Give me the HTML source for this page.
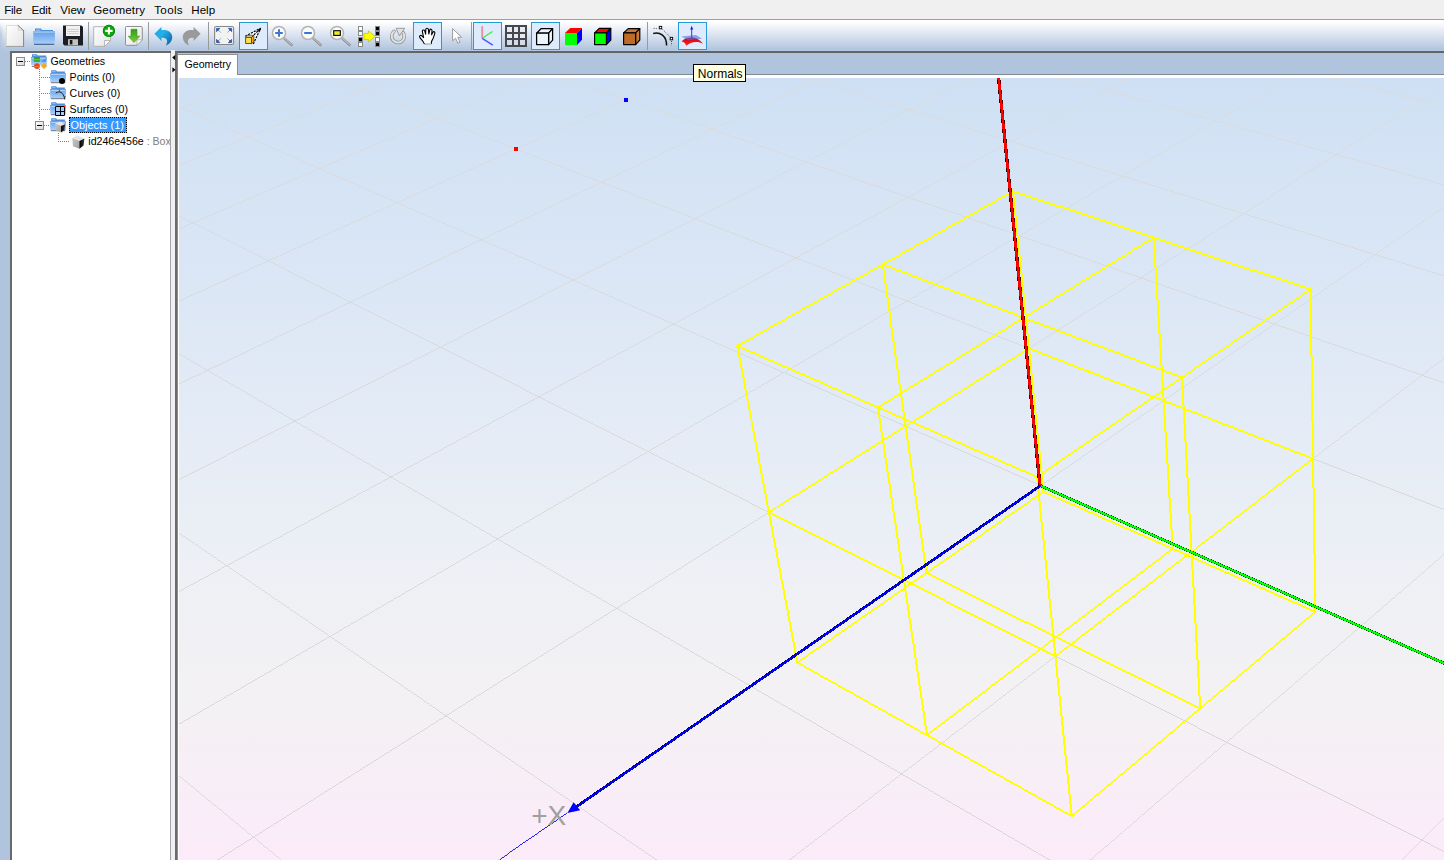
<!DOCTYPE html>
<html><head><meta charset="utf-8"><title>Geometry</title>
<style>
html,body{margin:0;padding:0}
body{width:1444px;height:860px;overflow:hidden;background:#b0c4de;position:relative;font-family:"Liberation Sans",sans-serif;color:#000}
div,span,svg{position:absolute}
#menubar{left:0;top:0;width:1444px;height:19px;background:#f0f0f0;border-bottom:1px solid #a0a0a0}
#menubar span{top:2px;font-size:11.6px;line-height:15px;white-space:nowrap}
#toolbar{left:0;top:20px;width:1444px;height:31px;background:linear-gradient(to bottom,#fff 0,#fff 6%,#b2c5df 95%,#b8cbe6 100%)}
#tbleft{left:0;top:22px;width:4px;height:29px;background:linear-gradient(to right,rgba(176,196,222,.85),rgba(176,196,222,0));-webkit-mask-image:linear-gradient(to bottom,transparent,#000 45%);mask-image:linear-gradient(to bottom,transparent,#000 45%)}
#tbsvg{left:0;top:0}
#tree{left:10px;top:51px;width:159px;height:809px;background:#fff;border-left:2px solid #696969;border-top:2px solid #696969;box-sizing:content-box;overflow:hidden}
#treeR{left:170px;top:53px;width:1px;height:807px;background:#a0a4ac}
#split{left:171px;top:50px;width:4px;height:810px;background:#f0f0f0}
#darkv{left:175px;top:51px;width:2px;height:809px;background:#6b6b6b}
#darkv2{left:177px;top:53px;width:1px;height:807px;background:#8c8c8c}
#darkh{left:175px;top:51px;width:1269px;height:2px;background:#646464}
#strip{left:177px;top:53px;width:1267px;height:21px;background:#b0c4de}
#stripline{left:178px;top:74px;width:1266px;height:1px;background:#7f8894}
#white{left:178px;top:75px;width:1266px;height:785px;background:#fff}
#tab{left:178px;top:54px;width:59px;height:20px;background:#fff;border-top:1px solid #8a8f98;border-right:1px solid #8a8f98;box-sizing:content-box}
#tab span{left:6.6px;top:2px;font-size:10.6px;line-height:15px}
#vp{left:179px;top:78px}
.t{font-size:10.6px;line-height:16px;white-space:nowrap;height:16px}
#sel{left:69px;top:117px;width:56px;height:14px;background:#e8a040;border:1px dotted #000;box-sizing:content-box}
#sel i{position:absolute;left:0;top:0;right:0;bottom:0;background:#3399ff}
#tip{left:693px;top:64px;width:51px;height:16px;background:#ffffe1;border:1px solid #000;box-sizing:content-box}
#tip span{left:3.8px;top:0.5px;font-size:12px;line-height:16px}
</style></head><body>
<div id="menubar"><span style="left:4.3px;letter-spacing:-.3px">File</span><span style="left:31.4px;letter-spacing:-.1px">Edit</span><span style="left:60.3px">View</span><span style="left:93.2px;letter-spacing:.12px">Geometry</span><span style="left:154.2px;letter-spacing:.35px">Tools</span><span style="left:191.3px">Help</span></div>
<div id="toolbar"></div><div id="tbleft"></div>
<div id="darkh"></div>
<div id="strip"></div><div id="stripline"></div><div id="white"></div>
<div id="tree"></div><div id="treeR"></div><div id="split"></div><div id="darkv"></div><div id="darkv2"></div>
<svg id="arrows" width="4" height="30" viewBox="0 0 4 30" style="left:172px;top:54px"><path d="M3.2 1L0.2 3.6L3.2 6.2Z M0.4 13.2L3.4 15.8L0.4 18.4Z" fill="#000"/></svg>
<div id="tab"><span>Geometry</span></div>
<svg id="vp" width="1265" height="782" viewBox="0 0 1265 782" shape-rendering="crispEdges">
<defs><linearGradient id="bg" x1="0" y1="0" x2="0" y2="1"><stop offset="0" stop-color="#cfe0f4"/><stop offset="0.43" stop-color="#e3ebf6"/><stop offset="0.64" stop-color="#eef0f5"/><stop offset="0.8" stop-color="#f3f1f3"/><stop offset="1" stop-color="#fcebfa"/></linearGradient><linearGradient id="gg" gradientUnits="userSpaceOnUse" x1="0" y1="0" x2="0" y2="782"><stop offset="0" stop-color="#dbdbdd"/><stop offset="0.6" stop-color="#d6d6d6"/><stop offset="1" stop-color="#d3d3d3"/></linearGradient></defs>
<rect width="1265" height="782" fill="url(#bg)"/>
<g stroke="url(#gg)" fill="none">
<path d="M91.4 -5L-5 32.9" stroke-width="0.931"/>
<path d="M225.2 -5L-5 89.4" stroke-width="0.925"/>
<path d="M363 -5L-5 153.1" stroke-width="0.919"/>
<path d="M505.1 -5L-5 225.4" stroke-width="0.911"/>
<path d="M1134.6 -5L1270 29.4" stroke-width="0.969"/>
<path d="M651.7 -5L-5 308.3" stroke-width="0.903"/>
<path d="M866.2 -5L1270 108.2" stroke-width="0.963"/>
<path d="M802.9 -5L-5 404.1" stroke-width="0.892"/>
<path d="M611.9 -5L1270 199.5" stroke-width="0.955"/>
<path d="M959 -5L-5 516.2" stroke-width="0.880"/>
<path d="M370.5 -5L1270 306.5" stroke-width="0.945"/>
<path d="M1120.2 -5L-5 649.1" stroke-width="0.865"/>
<path d="M141.2 -5L1270 433.5" stroke-width="0.932"/>
<path d="M1270 5.6L30.4 787" stroke-width="0.846"/>
<path d="M-5 26.6L1270 587" stroke-width="0.915"/>
<path d="M1270 125.6L312.2 787" stroke-width="0.823"/>
<path d="M-5 135.5L1270 775.8" stroke-width="0.894"/>
<path d="M1270 276.6L603.8 787" stroke-width="0.794"/>
<path d="M-5 272.9L879.3 787" stroke-width="0.865"/>
<path d="M1270 472.1L905.6 787" stroke-width="0.757"/>
<path d="M-5 451.6L485 787" stroke-width="0.825"/>
<path d="M1270 735.5L1218.3 787" stroke-width="0.708"/>
<path d="M-5 693.7L108.3 787" stroke-width="0.772"/>
</g>
<g stroke="#ff0" fill="none" stroke-linecap="square">
<path d="M864.5 413.8L618.4 584.6" stroke-width="1.643"/>
<path d="M864.5 413.8L1136.4 533.8" stroke-width="1.830"/>
<path d="M864.5 413.8L834.1 113.2" stroke-width="1.990"/>
<path d="M850 270.4L589.9 434.3" stroke-width="1.692"/>
<path d="M850 270.4L1134 380.7" stroke-width="1.864"/>
<path d="M993.7 470.8L974.7 159.6" stroke-width="1.996"/>
<path d="M834.1 113.2L558.4 268" stroke-width="1.744"/>
<path d="M834.1 113.2L1131.5 211.3" stroke-width="1.899"/>
<path d="M1136.4 533.8L1131.5 211.3" stroke-width="2.000"/>
<path d="M993.7 470.8L748.1 657.1" stroke-width="1.593"/>
<path d="M747.5 495L1021.2 630.5" stroke-width="1.793"/>
<path d="M747.5 495L703.7 186.5" stroke-width="1.980"/>
<path d="M974.7 159.6L699 329.5" stroke-width="1.703"/>
<path d="M703.7 186.5L1003 299.4" stroke-width="1.871"/>
<path d="M1021.2 630.5L1003 299.4" stroke-width="1.997"/>
<path d="M1136.4 533.8L892.8 738.2" stroke-width="1.532"/>
<path d="M618.4 584.6L892.8 738.2" stroke-width="1.745"/>
<path d="M618.4 584.6L558.4 268" stroke-width="1.965"/>
<path d="M1134 380.7L876.4 578.2" stroke-width="1.588"/>
<path d="M589.9 434.3L876.4 578.2" stroke-width="1.787"/>
<path d="M748.1 657.1L699 329.5" stroke-width="1.978"/>
<path d="M1131.5 211.3L858 398.9" stroke-width="1.649"/>
<path d="M558.4 268L858 398.9" stroke-width="1.833"/>
<path d="M892.8 738.2L858 398.9" stroke-width="1.990"/>
</g>
<rect x="335" y="69" width="4" height="4" fill="#f00"/>
<rect x="445" y="20" width="4" height="4" fill="#00f"/>
<path d="M861 407.5L819.1 -5" stroke="#400" stroke-width="3.336" fill="none"/>
<path d="M861 407.5L819.1 -5" stroke="#f00" stroke-width="2.536" fill="none"/>
<path d="M861.7 407.9L1270 587.4" stroke="#050" stroke-width="2.930" fill="none"/>
<path d="M861.7 407.9L1270 587.4" stroke="#0f0" stroke-width="2.130" fill="none"/>
<path d="M388.4 734.9L312.2 787" stroke="#00f" stroke-width="0.826" fill="none"/>
<path d="M861.7 407.5L394.4 730.8" stroke="#004" stroke-width="2.812" fill="none"/>
<path d="M861.7 407.5L394.4 730.8" stroke="#00f" stroke-width="2.012" fill="none"/>
<path d="M388.4 734.9L394.6 724.2L401.2 732.3Z" fill="#00f" shape-rendering="auto"/>
<text x="352.2" y="747.2" font-family="Liberation Sans, sans-serif" font-size="28" fill="#a0a0a0">+X</text>
</svg>
<svg id="treeicons" width="160" height="110" viewBox="10 51 160 110" style="position:absolute;left:10px;top:51px" ><defs><linearGradient id="fd2" x1="0" y1="0" x2="0" y2="1"><stop offset="0" stop-color="#4388dc"/><stop offset="0.18" stop-color="#6ea8ee"/><stop offset="1" stop-color="#b0d2fa"/></linearGradient><linearGradient id="eb" x1="0" y1="0" x2="1" y2="1"><stop offset="0" stop-color="#fff"/><stop offset="1" stop-color="#d8d8d8"/></linearGradient></defs><g shape-rendering="crispEdges"><path d="M25 61.5H31" stroke="#808080" stroke-width="1" stroke-dasharray="1 1"/><path d="M39.5 69V125" stroke="#808080" stroke-width="1" stroke-dasharray="1 1"/><path d="M39 77.5H50" stroke="#808080" stroke-width="1" stroke-dasharray="1 1"/><path d="M39 93.5H50" stroke="#808080" stroke-width="1" stroke-dasharray="1 1"/><path d="M39 109.5H50" stroke="#808080" stroke-width="1" stroke-dasharray="1 1"/><path d="M44 125.5H50" stroke="#808080" stroke-width="1" stroke-dasharray="1 1"/><path d="M58.5 133V142" stroke="#808080" stroke-width="1" stroke-dasharray="1 1"/><path d="M58 141.5H70" stroke="#808080" stroke-width="1" stroke-dasharray="1 1"/><rect x="16.5" y="57.5" width="8" height="8" fill="url(#eb)" stroke="#8a8a8a"/><path d="M18 61.5h5" stroke="#000"/><rect x="35.5" y="121.5" width="8" height="8" fill="url(#eb)" stroke="#8a8a8a"/><path d="M37 125.5h5" stroke="#000"/></g><g transform="translate(31,53)"><path d="M1 1.2h4.9l0.8 1.2h8.3v2.4H1z" fill="#4f8ede"/><path d="M2 2.2h3.4v1H2z" fill="#9cc2f0"/><rect x="0.2" y="3.7" width="15.7" height="8.6" rx="0.6" fill="url(#fd2)"/><path d="M1 5.2h14" stroke="#cfe2fa" stroke-width="0.9"/><rect x="2.9" y="4" width="6" height="4.9" fill="#2eb41a"/><path d="M3 6.3h5.8" stroke="#6ee03c" stroke-width="0.8"/><path d="M3 5.2h5.8" stroke="#1e8a10" stroke-width="0.7"/><path d="M10 8.8L14.6 5.2V8.8Z" fill="#2a9af0"/><path d="M0.8 13.4h3" stroke="#5a6478" stroke-width="0.9"/><circle cx="6" cy="13.1" r="2.9" fill="#e8481c"/><path d="M4 13.6h4" stroke="#ff7a3a" stroke-width="1"/><path d="M13 9.8L15.9 12.8L13 15.8L10.1 12.8Z" fill="#f4a81c" stroke="#f0b030" stroke-width="0.8" stroke-linejoin="round"/></g><g transform="translate(50,69)"><path d="M1.2 1.2h4.9l0.8 1.2h8v2.4H1.2z" fill="#4f8ede"/><path d="M2 2.2h3.6v1H2z" fill="#9cc2f0"/><rect x="0.2" y="3.9" width="15.7" height="9.6" rx="0.6" fill="url(#fd2)"/><path d="M1 5.3h14" stroke="#cfe2fa" stroke-width="0.9"/><path d="M1 13.7h14.2" stroke="#5a6478" stroke-width="0.9"/></g><circle cx="62" cy="81.1" r="3" fill="#000"/><g transform="translate(50,85)"><path d="M1.2 1.2h4.9l0.8 1.2h8v2.4H1.2z" fill="#4f8ede"/><path d="M2 2.2h3.6v1H2z" fill="#9cc2f0"/><rect x="0.2" y="3.9" width="15.7" height="9.6" rx="0.6" fill="url(#fd2)"/><path d="M1 5.3h14" stroke="#cfe2fa" stroke-width="0.9"/><path d="M1 13.7h14.2" stroke="#5a6478" stroke-width="0.9"/></g><path d="M55.8 93.2C59.4 90.4 63.4 92 64.8 99.4" fill="none" stroke="#1a1a1a" stroke-width="0.95"/><path d="M58.8 90.2h1.4M65 96v1.2" stroke="#222" stroke-width="0.8"/><g transform="translate(50,101)"><path d="M1.2 1.2h4.9l0.8 1.2h8v2.4H1.2z" fill="#4f8ede"/><path d="M2 2.2h3.6v1H2z" fill="#9cc2f0"/><rect x="0.2" y="3.9" width="15.7" height="9.6" rx="0.6" fill="url(#fd2)"/><path d="M1 5.3h14" stroke="#cfe2fa" stroke-width="0.9"/><path d="M1 13.7h14.2" stroke="#5a6478" stroke-width="0.9"/></g><g shape-rendering="crispEdges"><rect x="55.5" y="106.5" width="9" height="9" fill="#a8ccf6" stroke="#000" stroke-width="1"/><path d="M60.5 106V116M55 111.5H65" stroke="#000"/><rect x="55" y="106" width="1" height="1" fill="#f00"/><rect x="64" y="106" width="1" height="1" fill="#f00"/><rect x="55" y="115" width="1" height="1" fill="#f00"/><rect x="64" y="115" width="1" height="1" fill="#f00"/></g><g transform="translate(50,117)"><path d="M1.2 1.2h4.9l0.8 1.2h8v2.4H1.2z" fill="#4f8ede"/><path d="M2 2.2h3.6v1H2z" fill="#9cc2f0"/><rect x="0.2" y="3.9" width="15.7" height="9.6" rx="0.6" fill="url(#fd2)"/><path d="M1 5.3h14" stroke="#cfe2fa" stroke-width="0.9"/><path d="M1 13.7h14.2" stroke="#5a6478" stroke-width="0.9"/></g><g transform="translate(54.8,121.6) scale(0.82)"><defs><linearGradient id="cbk" x1="0" y1="0" x2="1" y2="0"><stop offset="0" stop-color="#000"/><stop offset="1" stop-color="#3c3c3c"/></linearGradient><linearGradient id="cgr" x1="0" y1="0" x2="1" y2="1"><stop offset="0" stop-color="#c8c8c8"/><stop offset="1" stop-color="#a2a2a2"/></linearGradient></defs><path d="M0.4 2.6L5.9 0L12.6 3.2L7.6 5.5Z" fill="#e6e6e6"/><path d="M0.4 2.6L7.6 5.5V13.4L1.2 10.8Z" fill="url(#cgr)"/><path d="M7.6 5.5L12.6 3.2L11.8 10.2L7.6 13.4Z" fill="url(#cbk)"/></g><g transform="translate(71.8,135.4) scale(1.0)"><defs><linearGradient id="cbk" x1="0" y1="0" x2="1" y2="0"><stop offset="0" stop-color="#000"/><stop offset="1" stop-color="#3c3c3c"/></linearGradient><linearGradient id="cgr" x1="0" y1="0" x2="1" y2="1"><stop offset="0" stop-color="#c8c8c8"/><stop offset="1" stop-color="#a2a2a2"/></linearGradient></defs><path d="M0.4 2.6L5.9 0L12.6 3.2L7.6 5.5Z" fill="#e6e6e6"/><path d="M0.4 2.6L7.6 5.5V13.4L1.2 10.8Z" fill="url(#cgr)"/><path d="M7.6 5.5L12.6 3.2L11.8 10.2L7.6 13.4Z" fill="url(#cbk)"/></g></svg>
<div id="sel"><i></i></div>
<span class="t" style="left:50.4px;top:53px">Geometries</span>
<span class="t" style="left:69.6px;top:69px">Points (0)</span>
<span class="t" style="left:69.6px;top:85px;letter-spacing:.14px">Curves (0)</span>
<span class="t" style="left:69.6px;top:101px;letter-spacing:.07px">Surfaces (0)</span>
<span class="t" style="left:70.6px;top:117px;color:#fff;font-size:10.9px">Objects (1)</span>
<span class="t" style="left:88.3px;top:133px;width:81.7px;overflow:hidden">id246e456e<span style="position:static;color:#808080"> : Box</span></span>
<svg id="tbsvg" width="760" height="54" viewBox="0 0 760 54">
<defs>
<linearGradient id="pg" x1="0" y1="0" x2="1" y2="1"><stop offset="0" stop-color="#fff"/><stop offset="1" stop-color="#e4e4e4"/></linearGradient>
<linearGradient id="fd" x1="0" y1="0" x2="0" y2="1"><stop offset="0" stop-color="#4a8fe0"/><stop offset="0.15" stop-color="#6aa5ec"/><stop offset="1" stop-color="#a8cdf8"/></linearGradient>
<linearGradient id="ud" x1="0" y1="0" x2="1" y2="1"><stop offset="0" stop-color="#1ea0e0"/><stop offset="0.4" stop-color="#25b0ea"/><stop offset="1" stop-color="#0a5a9c"/></linearGradient>
<linearGradient id="ga" x1="0" y1="0" x2="0" y2="1"><stop offset="0" stop-color="#2f9a1c"/><stop offset="1" stop-color="#7fd034"/></linearGradient>
<linearGradient id="rs" x1="0" y1="0" x2="0" y2="1"><stop offset="0" stop-color="#a01030"/><stop offset="0.5" stop-color="#f01010"/><stop offset="1" stop-color="#ff2020"/></linearGradient>
</defs>
<!-- new -->
<g>
<path d="M6.5 25.5H18.2L23.5 30.6V46.3H6.5Z" fill="url(#pg)" stroke="#dedede" stroke-width="1"/>
<path d="M6.2 46.5H23.9" stroke="#9c9c9c" stroke-width="1.1" fill="none"/><path d="M6.6 47.3H23.6" stroke="#c4cad6" stroke-width="0.7" fill="none"/>
<path d="M23.6 30.4V46.8" stroke="#808080" stroke-width="0.95" fill="none"/>
<path d="M18.2 25.6V30.6H23.4Z" fill="#ececec"/>
<path d="M18.2 25.6V30.4H23" stroke="#d0d0d0" stroke-width="0.7" fill="none"/>
<path d="M17.8 25.2L23.7 30.8" stroke="#6a6a6a" stroke-width="0.9" fill="none"/>
</g>
<!-- open folder -->
<g>
<path d="M35 28.5h6l1 1.5h11v4h-18z" fill="#4f8fdc"/>
<path d="M36 29.6h4.5v1.4H36z" fill="#8db8ee"/>
<rect x="33.3" y="31" width="21.6" height="12.8" rx="0.8" fill="url(#fd)"/>
<path d="M33.8 32h20.6" stroke="#d4e6fb" stroke-width="0.9"/>
<path d="M34 44.3h20.2" stroke="#3c5a8c" stroke-width="1.1"/>
</g>
<!-- save -->
<g>
<path d="M63 25.5h18.5l1.5 1.5v18.5h-18.5l-1.5-1.5z" fill="#1c1e26"/>
<rect x="66" y="25.8" width="14" height="10.2" fill="#f2f2f2"/>
<path d="M67.3 29.4h11.4M67.3 31.5h11.4M67.3 33.6h11.4" stroke="#d0cdc8" stroke-width="1"/>
<rect x="68" y="39.2" width="10" height="6" fill="#c4c2bc"/>
<rect x="69.8" y="40" width="2.6" height="4.4" fill="#14161e"/>
</g>
<path d="M88.5 22V50M148.5 22V50M208.5 22V50M471.5 22V50M647.5 22V50" stroke="#9a9a9a" stroke-width="1" shape-rendering="crispEdges"/>
<!-- new+ -->
<g>
<path d="M93.7 26.7H110.5V40.5L104.5 46.3H93.7Z" fill="url(#pg)" stroke="#b4b4b4" stroke-width="1"/>
<path d="M104.5 46.3V40.5H110.5Z" fill="#fff" stroke="#a8a8a8" stroke-width="0.8"/>
<circle cx="108.9" cy="30.9" r="6.1" fill="#0fa50f"/><circle cx="108.9" cy="30.9" r="5.6" fill="none" stroke="#0a8c0a" stroke-width="0.9"/>
<path d="M108.9 27.2V34.6M105.2 30.9H112.6" stroke="#fff" stroke-width="2.1"/>
</g>
<!-- download -->
<g>
<path d="M126.5 26.5H141.2Q142.3 26.5 142.3 27.6V39.8L137 45.3H126.5Q125.5 45.3 125.5 44.3V27.5Q125.5 26.5 126.5 26.5Z" fill="url(#pg)" stroke="#8e8e8e" stroke-width="1"/>
<path d="M137 45.3V39.8H142.3Z" fill="#fff" stroke="#a8a8a8" stroke-width="0.8"/>
<path d="M131 29.2h6v7h2.8l-5.8 6.3l-5.8-6.3H131z" fill="url(#ga)" stroke="#3a9a20" stroke-width="0.6"/>
</g>
<!-- undo -->
<path id="undo" d="M154.4 33.7L161.4 26.9V30.2C167.6 29.4 172.3 32.2 172.2 37.2C172.1 41.2 169.2 44.2 165.8 45.6C167.5 42.8 167.6 40.2 165.9 38.7C164.7 37.7 163 37.7 161.4 37.9V41Z" fill="url(#ud)"/>
<!-- redo -->
<path d="M200.6 33.7L193.6 26.9V30.2C187.4 29.4 182.7 32.2 182.8 37.2C182.9 41.2 185.8 44.2 189.2 45.6C187.5 42.8 187.4 40.2 189.1 38.7C190.3 37.7 192 37.7 193.6 37.9V41Z" fill="#9a9a9a"/>
<!-- fullscreen -->
<g>
<rect x="214.6" y="26.5" width="19" height="18" rx="1.6" fill="#f2f2f0" stroke="#8a8884" stroke-width="1.1"/>
<g fill="#2a5cb0" stroke="#2a5cb0" stroke-width="0.9">
<path d="M216.6 28.4h3.2l-3.2 3.2z"/><path d="M217.5 29.3l3.4 3.4" stroke-dasharray="2.2 0.5 0.8 0.5 0.5"/>
<path d="M231.6 28.4h-3.2l3.2 3.2z"/><path d="M230.7 29.3l-3.4 3.4" stroke-dasharray="2.2 0.5 0.8 0.5 0.5"/>
<path d="M216.6 42.6h3.2l-3.2-3.2z"/><path d="M217.5 41.7l3.4-3.4" stroke-dasharray="2.2 0.5 0.8 0.5 0.5"/>
<path d="M231.6 42.6h-3.2l3.2-3.2z"/><path d="M230.7 41.7l-3.4-3.4" stroke-dasharray="2.2 0.5 0.8 0.5 0.5"/>
</g></g>
<!-- selected boxes -->
<g fill="#ddebfc" stroke="#2a9ad6" stroke-width="1" shape-rendering="crispEdges">
<rect x="239.5" y="22.5" width="28" height="27"/>
<rect x="413.5" y="22.5" width="28" height="27"/>
<rect x="473.5" y="22.5" width="28" height="27"/>
<rect x="531.5" y="22.5" width="28" height="27"/>
<rect x="678.5" y="22.5" width="28" height="27"/>
</g>
<!-- perspective -->
<g stroke-linejoin="round">
<path d="M246 36L260.6 28.3L253.4 43.5L251.5 37.2Z" fill="#fff" fill-opacity="0.8"/>
<path d="M245.3 36.3L260.7 28.2M251.7 37L260.5 28.5M253.3 43.9L260.6 28.4" fill="none" stroke="#000" stroke-dasharray="2.1 1.1" stroke-width="1.2"/>
<path d="M245.4 37.2L247.1 35.3H253.6L251.5 37.2Z" fill="#fff8c0" stroke="#3c2c00" stroke-width="0.7"/>
<path d="M251.5 37.2L253.9 35.4V42L251.5 43.6Z" fill="#ffa428" stroke="#3c2c00" stroke-width="0.7"/>
<rect x="245.6" y="37.4" width="5.9" height="6.1" fill="#fae048" stroke="#5a4200" stroke-width="0.9"/>
<path d="M257.6 30.2L261.1 27.7L260 31.6Z" fill="#000"/>
</g>
<!-- zoom in -->
<g>
<path d="M284 38.2L291.6 45" stroke="#8c8c8c" stroke-width="2.4" stroke-linecap="round"/>
<path d="M284.2 38L291.4 44.6" stroke="#dcdcdc" stroke-width="0.9" stroke-linecap="round"/>
<circle cx="279" cy="33" r="6.5" fill="#fbfbfb" stroke="#b4b4b4" stroke-width="1.5"/>
</g>
<path d="M279 29.3V36.7M275.2 33H282.8" stroke="#3a78d4" stroke-width="2"/>
<!-- zoom out -->
<g transform="translate(29,0)">
<path d="M284 38.2L291.6 45" stroke="#8c8c8c" stroke-width="2.4" stroke-linecap="round"/>
<path d="M284.2 38L291.4 44.6" stroke="#dcdcdc" stroke-width="0.9" stroke-linecap="round"/>
<circle cx="279" cy="33" r="6.5" fill="#fbfbfb" stroke="#b4b4b4" stroke-width="1.5"/>
</g>
<path d="M304.2 33H311.8" stroke="#3a78d4" stroke-width="2"/>
<!-- zoom rect -->
<g transform="translate(58,0)">
<path d="M284 38.2L291.6 45" stroke="#8c8c8c" stroke-width="2.4" stroke-linecap="round"/>
<path d="M284.2 38L291.4 44.6" stroke="#dcdcdc" stroke-width="0.9" stroke-linecap="round"/>
<circle cx="279" cy="33" r="6.5" fill="#fbfbfb" stroke="#b4b4b4" stroke-width="1.5"/>
</g>
<rect x="333.7" y="30.7" width="6.6" height="4.7" fill="#ecec24" stroke="#000" stroke-width="1.1"/>
<!-- invert selection -->
<g shape-rendering="crispEdges">
<rect x="358" y="26" width="5" height="10" fill="#8a8a8a"/><rect x="358" y="37" width="5" height="10" fill="#8a8a8a"/>
<rect x="359" y="27" width="3" height="3" fill="#fff"/><rect x="359" y="32" width="3" height="3" fill="#fff"/>
<rect x="359" y="38" width="3" height="3" fill="#000"/><rect x="359" y="43" width="3" height="3" fill="#fff"/>
<rect x="375" y="26" width="5" height="10" fill="#8a8a8a"/><rect x="375" y="37" width="5" height="10" fill="#8a8a8a"/>
<rect x="376" y="27" width="3" height="3" fill="#000"/><rect x="376" y="32" width="3" height="3" fill="#000"/>
<rect x="376" y="38" width="3" height="3" fill="#fff"/><rect x="376" y="43" width="3" height="3" fill="#000"/>
</g>
<path d="M364 33.4h4.4v-2.6l6.6 5.6l-6.6 5.6v-2.6H364z" fill="#ff0" stroke="#a8a800" stroke-width="0.5"/>
<!-- rotate -->
<g>
<path d="M394 31.4A6.3 6.3 0 1 0 403 32.5" fill="none" stroke="#8c8c8c" stroke-width="3.5" stroke-linecap="round"/>
<path d="M394 31.4A6.3 6.3 0 1 0 403 32.5" fill="none" stroke="#e2e2e2" stroke-width="2" stroke-linecap="round"/>
<path d="M396.2 28.3H404.7L399.4 35.9Z" fill="#e2e2e2" stroke="#8c8c8c" stroke-width="0.85" stroke-linejoin="round"/>
</g>
<!-- hand -->
<g transform="translate(419,27.8)">
<path d="M5.2 15.8C4 13 2 11.5 0.8 9.6C0 8.2 1.4 7 2.8 8L4.6 9.8L3.4 3.8C3 2 5.2 1.6 5.8 3.2L6.6 6.4L6.8 1.6C6.9 0 9.2 0 9.4 1.6L9.8 6.2L10.8 2.2C11.2 0.8 13.2 1.2 13 2.8L12.6 7L13.8 4.6C14.6 3.2 16.2 4 15.8 5.6C15 8.6 14.4 11 12.6 13.6L12.2 15.8Z" fill="#fff" stroke="#000" stroke-width="1.1" stroke-linejoin="round"/>
<path d="M5.6 15.4h6.4v1H5.6z" fill="#fff"/>
</g>
<!-- pointer -->
<path d="M452.6 28.6V40.8L455.6 38.2L457.8 43.2L460 42.2L457.8 37.4L461.6 37.2Z" fill="#fff" stroke="#9a9a9a" stroke-width="1" stroke-linejoin="round"/>
<!-- axes icon -->
<path d="M482.2 38.3V26.2" stroke="#e890a0" stroke-width="1.9"/>
<path d="M482.2 38.3L492.4 31.5" stroke="#3cf03c" stroke-width="1.3"/>
<path d="M482.2 38.3L492.8 45.2" stroke="#5858ff" stroke-width="1.6"/>
<!-- grid -->
<g shape-rendering="crispEdges">
<rect x="505" y="25" width="22" height="22" fill="#46484c"/>
<g fill="#e6eaf2">
<rect x="507" y="27" width="5" height="5"/><rect x="514" y="27" width="4" height="5"/><rect x="520" y="27" width="5" height="5"/>
<rect x="507" y="34" width="5" height="4"/><rect x="514" y="34" width="4" height="4"/><rect x="520" y="34" width="5" height="4"/>
</g><g fill="#d2dcea">
<rect x="507" y="40" width="5" height="5"/><rect x="514" y="40" width="4" height="5"/><rect x="520" y="40" width="5" height="5"/>
</g></g>
<!-- wire cube -->
<g stroke="#000" stroke-width="1.25" stroke-linejoin="round" fill="#eef4ff">
<path d="M536.6 33.2L541 28.7H552.6L548.6 33.2Z"/>
<path d="M548.6 33.2L552.6 28.7V40.2L548.6 44.6Z"/>
<rect x="536.6" y="33.2" width="12" height="11.4"/>
</g>
<!-- color cube 1 -->
<path d="M565 33L570.3 27.9H582L577 33Z" fill="#f00"/>
<path d="M577 33L582 27.9V39.8L577 45.1Z" fill="#00f"/>
<rect x="565" y="33" width="12" height="12.1" fill="#0f0"/>
<!-- color cube 2 -->
<g stroke="#000" stroke-width="1.15" stroke-linejoin="round">
<path d="M594.6 32.8L599.2 28.4H610.8L606.4 32.8Z" fill="#f00"/>
<path d="M606.4 32.8L610.8 28.4V40L606.4 44.6Z" fill="#00f"/>
<rect x="594.6" y="32.8" width="11.8" height="11.8" fill="#0f0"/>
</g>
<!-- brown cube -->
<g stroke="#000" stroke-width="1.15" stroke-linejoin="round">
<path d="M623.6 32.8L628.2 28.6H639.8L635.6 32.8Z" fill="#c8783a"/>
<path d="M635.6 32.8L639.8 28.6V40L635.6 44.6Z" fill="#c87a34"/>
<rect x="623.6" y="32.8" width="12" height="11.8" fill="#c06a28"/>
</g>
<!-- curve -->
<g fill="none" stroke="#111">
<path d="M653.2 33.4C660 31.6 666.6 36 666.6 45.4" stroke-width="1.5"/>
<path d="M653.6 28.4H658M662.6 29.4L669.6 36.4M671.5 41V45.6" stroke-width="0.9" stroke-dasharray="1 1.2" stroke="#444"/>
<rect x="659.3" y="26.4" width="2.4" height="2.4" stroke-width="1" fill="#fff"/>
<rect x="670.2" y="37.4" width="2.4" height="2.4" stroke-width="1" fill="#fff"/>
</g>
<!-- normals -->
<g>
<path d="M681.4 41.6C685.6 36.2 697.4 35.2 703 43.8C698 40.6 690 41.8 686.4 45.8C685 42.8 683.4 41.6 681.4 41.6Z" fill="url(#rs)"/>
<path d="M681.4 36.4L696 35L702.2 38.8L688 40.2Z" fill="#5a6ae0" fill-opacity="0.6"/>
<path d="M691.7 37.8V28.6" stroke="#2838f0" stroke-width="1"/>
<path d="M691.7 25.8L690.2 29.4H693.2Z" fill="#1020f0"/>
</g>
</svg>
<div id="tip"><span>Normals</span></div>
</body></html>
